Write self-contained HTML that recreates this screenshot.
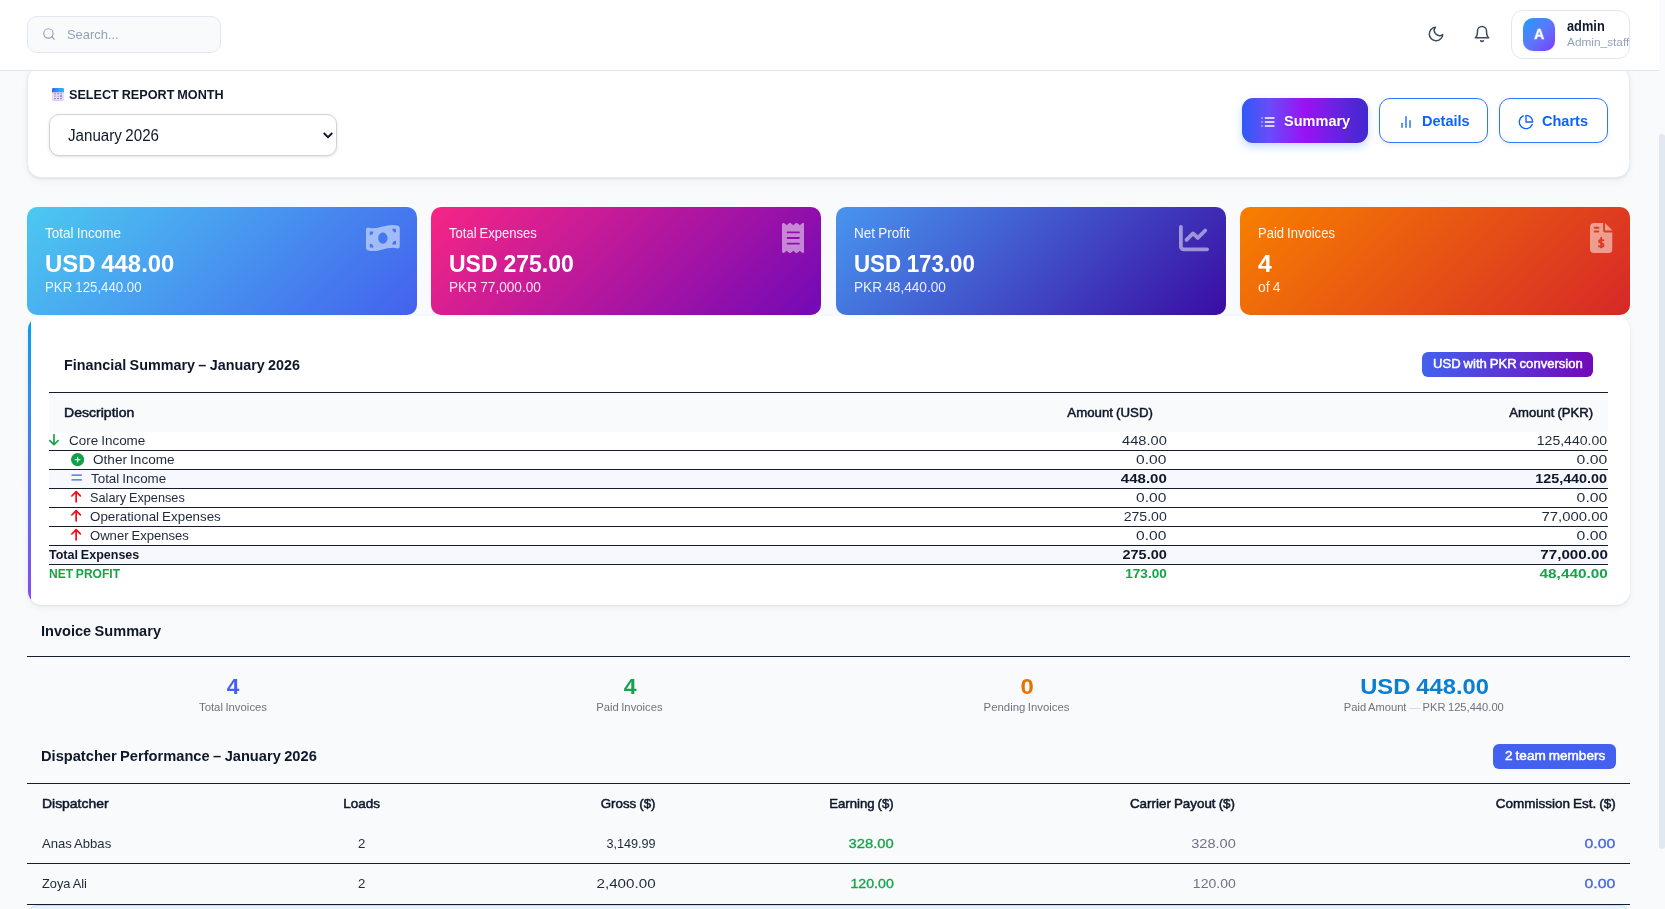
<!DOCTYPE html>
<html lang="en"><head>
<meta charset="utf-8">
<title>Financial Reports</title>
<style>
*{box-sizing:border-box;margin:0;padding:0}
html,body{width:1665px;height:909px;overflow:hidden}
body{position:relative;background:#f8fafc;font-family:"Liberation Sans",sans-serif;color:#1e293b;font-size:13px;word-spacing:-.05em}
svg{display:block}
.t{position:absolute;white-space:nowrap;line-height:1.2}

/* ---------- top bar ---------- */
.topbar{position:absolute;left:0;top:0;width:1659px;height:71px;background:#fff;border-bottom:1px solid #e2e8f0;z-index:5}
.search{position:absolute;left:27px;top:16px;width:194px;height:37px;background:#f8fafc;border:1px solid #e2e8f0;border-radius:10px}
.search svg{position:absolute;left:14px;top:10px}
.search .t{left:39.4px;top:10px;font-size:13.5px;color:#94a3b8}
.ico-moon{position:absolute;left:1427px;top:25px}
.ico-bell{position:absolute;left:1473px;top:25px}
.user{position:absolute;left:1511px;top:10px;width:119px;height:49px;border:1px solid #e2e8f0;border-radius:12px;background:#fff;overflow:hidden}
.avatar{position:absolute;left:11px;top:7px;width:32px;height:32.5px;border-radius:10px;background:linear-gradient(135deg,#1f9dfb 0%,#5a79fa 50%,#7d3bff 100%);box-shadow:0 1px 3px rgba(67,97,238,.10)}
.avatar .t{left:0;width:32px;text-align:center;top:9px;color:#fff;font-weight:700;font-size:14px;-webkit-text-stroke:.3px #fff}
.uname{left:54.5px;top:7px;font-size:14px;font-weight:700;color:#0f172a}
.urole{left:54.5px;top:25px;font-size:11.5px;color:#94a3b8}

/* ---------- scrollbar ---------- */
.sbthumb{position:absolute;left:1659px;top:134px;width:6px;height:715px;background:#e2e8f0;border-radius:3px}

/* ---------- filter card ---------- */
.filter{position:absolute;left:27px;top:66px;width:1603px;height:112px;background:#fff;border:1px solid #e9edf3;border-radius:14px;box-shadow:0 1px 2px rgba(40,70,130,.10),0 3px 9px rgba(15,23,42,.045)}
.flabel{left:41px;top:20px;font-size:13.5px;font-weight:700;color:#0f172a}
.fcal{position:absolute;left:24px;top:21px}
.select{position:absolute;left:21px;top:47px;width:288px;height:42px;border:1px solid #ced4da;border-radius:10px;background:#fff;box-shadow:0 1px 3px rgba(15,23,42,.13)}
.select .t{left:18px;top:12px;font-size:15.6px;color:#0f172a}
.select svg{position:absolute;left:273.4px;top:17.4px}
.btn{position:absolute;top:31px;height:45px;border-radius:11px;font-size:15px;font-weight:700}
.btn svg{position:absolute}
.b1{left:1214px;width:126px;color:#fff;background:linear-gradient(90deg,#2f5af6 0%,#6a4bfa 22%,#9a12f4 50%,#6a22e2 75%,#4128cf 100%);box-shadow:0 4px 9px rgba(59,130,246,.28)}
.b2,.b3{width:109px;color:#0d63fb;background:#fff;border:1px solid #2f7bf7;box-shadow:0 2px 5px rgba(15,23,42,.07)}
.b2{left:1351px}
.b3{left:1471px}

/* ---------- stat cards ---------- */
.stat{position:absolute;top:207px;height:108px;width:390px;border-radius:10px;color:#fff;overflow:hidden}
.s1{left:27px;background:linear-gradient(135deg,#4cc9f0,#4361ee)}
.s2{left:431px;background:linear-gradient(135deg,#f72585,#7209b7)}
.s3{left:836px;background:linear-gradient(135deg,#4895ef,#3a0ca3)}
.s4{left:1240px;background:linear-gradient(135deg,#f77f00,#d62828)}
.stat .l{left:18.2px;top:18px;font-size:14.2px;opacity:.93}
.stat .v{left:18.2px;top:44px;font-size:24px;font-weight:700}
.stat .p{left:18.2px;top:72px;font-size:14.2px;opacity:.88}
.stat svg{position:absolute;opacity:.5}

/* ---------- financial summary ---------- */
.fin{position:absolute;left:27px;top:316px;width:1603px;height:289px}
.fin .bg{position:absolute;left:1px;top:0;right:0;bottom:0;border-radius:14px;background:#fff;overflow:hidden;box-shadow:0 1px 2px rgba(40,70,130,.10),0 3px 9px rgba(15,23,42,.045)}
.fin .bar{position:absolute;left:0;top:0;width:3px;height:100%;background:linear-gradient(180deg,#069fea 0%,#2f8df3 30%,#4f74f3 55%,#6a62f4 78%,#8b47f5 100%)}
.h5{font-size:15px;font-weight:700;color:#0f172a}
.badge{position:absolute;border-radius:6px;color:#fff;font-weight:400;-webkit-text-stroke:.45px currentColor;font-size:12.5px}
.ftable{position:absolute;left:22px;top:76px;width:1559px;height:193px}
.hline{position:absolute;height:1px;background:#151c2e}
.fth{position:absolute;left:0;top:1px;width:100%;height:39px;background:#f8fafc;font-weight:400;-webkit-text-stroke:.5px currentColor;font-size:13px;color:#0f172a}
.fr{position:absolute;left:0;width:100%;height:19px;border-bottom:1px solid #151c2e;font-size:13px;color:#1e293b}
.fr.alt{background:#f6f8fd}
.fr.last{border-bottom:0}
.fr.alt .b{color:#0f172a}
.fr svg{position:absolute}
.fr .t{top:2px}
.fr .t:not(.u):not(.k){margin-left:-.3px}
.u{right:441.5px}
.k{right:0.6px}
.b{font-weight:700}
.sb{font-weight:400;-webkit-text-stroke:.32px currentColor}
.sb6{font-weight:400;-webkit-text-stroke:.5px currentColor}
.green{color:#16a34a}

/* ---------- invoice summary ---------- */
.n{width:300px;text-align:center;font-size:22px;font-weight:700;top:670px}
.lb{width:300px;text-align:center;font-size:11px;color:#6c757d;top:700px}

/* ---------- dispatcher table ---------- */
.dh{font-weight:400;-webkit-text-stroke:.5px currentColor;color:#0f172a}
.blue{color:#4361ee}
.gray{color:#6b7280}
.note{position:absolute;left:27px;top:905px;width:1603px;height:40px;border:1px solid #b3e4fb;border-radius:10px;background:#e8f5fe}
</style>
</head>
<body>

<!-- scrollbar thumb -->
<div class="sbthumb"></div>

<!-- filter card (slides under the top bar) -->
<div class="filter">
  <svg class="fcal" width="12" height="13" viewBox="0 0 12 13"><defs><linearGradient id="calg" x1="0" y1="0" x2="1" y2="0"><stop offset="0" stop-color="#2f6bee"></stop><stop offset=".55" stop-color="#2f9cfb"></stop><stop offset="1" stop-color="#27b4fb"></stop></linearGradient></defs><rect x="0" y="0" width="12" height="13" rx="1.4" fill="#dcbff7"></rect><rect x="0" y="0" width="12" height="12.3" rx="1.4" fill="#e9dcf5"></rect><path d="M0 4.2V1.4A1.4 1.4 0 0 1 1.4 0h9.2A1.4 1.4 0 0 1 12 1.4v2.8z" fill="url(#calg)"></path><g fill="#8c7fab"><rect x="2.1" y="5.3" width="1.8" height="1"></rect><rect x="5.1" y="5.3" width="1.8" height="1"></rect><rect x="8.1" y="5.3" width="1.8" height="1"></rect><rect x="2.1" y="7.7" width="1.8" height="1" opacity=".65"></rect><rect x="5.1" y="7.7" width="1.8" height="1" opacity=".65"></rect><rect x="2.1" y="10.1" width="1.8" height="1"></rect><rect x="5.1" y="10.1" width="1.8" height="1"></rect><rect x="8.1" y="10.1" width="1.8" height="1"></rect></g><rect x="8" y="7" width="2" height="2.2" rx=".5" fill="#5aa9f6"></rect></svg>
  <span class="t flabel" style="top: 20px; transform: scaleX(0.9358); transform-origin: left center;">SELECT REPORT MONTH</span>
  <div class="select"><span class="t" style="top: 12.1px; transform: scaleX(0.9695); transform-origin: left center;">January 2026</span><svg width="10" height="7" viewBox="0 0 10 7" fill="none" stroke="#0f172a" stroke-width="1.9" stroke-linecap="butt" stroke-linejoin="miter"><path d="M.7 1L5 5.1L9.3 1"></path></svg></div>
  <div class="btn b1"><svg style="left:18px;top:16px" width="16" height="16" viewBox="0 0 24 24" fill="none" stroke="#fff" stroke-width="2" stroke-linecap="round" stroke-linejoin="round"><line x1="8" y1="6" x2="21" y2="6"></line><line x1="8" y1="12" x2="21" y2="12"></line><line x1="8" y1="18" x2="21" y2="18"></line><line x1="3" y1="6" x2="3.01" y2="6"></line><line x1="3" y1="12" x2="3.01" y2="12"></line><line x1="3" y1="18" x2="3.01" y2="18"></line></svg><span class="t" style="left: 41.7px; top: 14.2px; text-shadow: rgba(0, 0, 0, 0.15) 0px 1px 2px; transform: scaleX(0.9682); transform-origin: left center;">Summary</span></div>
  <div class="btn b2"><svg style="left:18px;top:15px" width="16" height="16" viewBox="0 0 24 24" fill="none" stroke="currentColor" stroke-width="2" stroke-linecap="round" stroke-linejoin="round"><line x1="18" y1="20" x2="18" y2="10"></line><line x1="12" y1="20" x2="12" y2="4"></line><line x1="6" y1="20" x2="6" y2="14"></line></svg><span class="t" style="left: 41.6px; top: 13.2px; transform: scaleX(0.9695); transform-origin: left center;">Details</span></div>
  <div class="btn b3"><svg style="left:18px;top:15px" width="16" height="16" viewBox="0 0 24 24" fill="none" stroke="currentColor" stroke-width="2" stroke-linecap="round" stroke-linejoin="round"><path d="M21.21 15.89A10 10 0 1 1 8 2.83"></path><path d="M22 12A10 10 0 0 0 12 2v10z"></path></svg><span class="t" style="left: 42.2px; top: 13.2px; transform: scaleX(0.9681); transform-origin: left center;">Charts</span></div>
</div>

<!-- top bar -->
<div class="topbar">
  <div class="search"><svg width="14" height="14" viewBox="0 0 24 24" fill="none" stroke="#94a3b8" stroke-width="2" stroke-linecap="round" stroke-linejoin="round"><circle cx="11" cy="11" r="8"></circle><line x1="21" y1="21" x2="16.65" y2="16.65"></line></svg><span class="t" style="top: 9.7px; transform: scaleX(0.955); transform-origin: left center;">Search...</span></div>
  <svg class="ico-moon" width="18" height="18" viewBox="0 0 24 24" fill="none" stroke="#3b4a62" stroke-width="2" stroke-linecap="round" stroke-linejoin="round"><path d="M21 12.79A9 9 0 1 1 11.21 3 7 7 0 0 0 21 12.79z"></path></svg>
  <svg class="ico-bell" width="18" height="18" viewBox="0 0 24 24" fill="none" stroke="#3b4a62" stroke-width="2" stroke-linecap="round" stroke-linejoin="round"><path d="M18 8A6 6 0 0 0 6 8c0 7-3 9-3 9h18s-3-2-3-9"></path><path d="M13.73 21a2 2 0 0 1-3.46 0"></path></svg>
  <div class="user">
    <div class="avatar"><span class="t" style="top: 7.8px;">A</span></div>
    <span class="t uname" style="top: 7.2px; transform: scaleX(0.9143); transform-origin: left center;">admin</span>
    <span class="t urole" style="top: 24.7px; transform: scaleX(1.0295); transform-origin: left center;">Admin_staff</span>
  </div>
</div>

<!-- stat cards -->
<div class="stat s1"><svg style="left:339px;top:16px" width="33.75" height="30" viewBox="0 0 576 512" fill="#fff"><path d="M0 112.5V422.3c0 18 10.1 35 27 41.3c87 32.5 174 10.3 261-11.9c79.8-20.3 159.6-40.7 239.3-18.9c23 6.3 48.7-9.5 48.7-33.4V89.7c0-18-10.1-35-27-41.3C462 15.9 375 38.1 288 60.3C208.2 80.6 128.4 100.9 48.7 79.1C25.6 72.8 0 88.6 0 112.5zM288 352c-44.2 0-80-43-80-96s35.8-96 80-96s80 43 80 96s-35.8 96-80 96zM64 352c35.3 0 64 28.7 64 64H64V352zm64-208c0 35.3-28.7 64-64 64V144h64zM512 304v64H448c0-35.3 28.7-64 64-64zM448 96h64v64c-35.3 0-64-28.7-64-64z"></path></svg><span class="t l" style="top: 18px; transform: scaleX(0.9524); transform-origin: left center;">Total Income</span><span class="t v" style="top: 43px; transform: scaleX(0.9938); transform-origin: left center;">USD 448.00</span><span class="t p" style="top: 72px; transform: scaleX(0.9335); transform-origin: left center;">PKR 125,440.00</span></div>
<div class="stat s2"><svg style="left:350.5px;top:16px" width="22.5" height="30" viewBox="0 0 384 512" fill="#fff"><path d="M14 2.2C22.5-1.7 32.5-.3 39.6 5.8L80 40.4 120.4 5.8c9-7.7 22.3-7.7 31.2 0L192 40.4 232.4 5.8c9-7.7 22.2-7.7 31.2 0L304 40.4 344.4 5.8c7.1-6.1 17.1-7.5 25.6-3.6s14 12.4 14 21.8V488c0 9.4-5.5 17.9-14 21.8s-18.5 2.5-25.6-3.6L304 471.6l-40.4 34.6c-9 7.7-22.2 7.7-31.2 0L192 471.6l-40.4 34.6c-9 7.7-22.3 7.7-31.2 0L80 471.6 39.6 506.2c-7.1 6.1-17.1 7.5-25.6 3.6S0 497.4 0 488V24C0 14.6 5.5 6.1 14 2.2zM96 144c-8.8 0-16 7.2-16 16s7.2 16 16 16H288c8.8 0 16-7.2 16-16s-7.2-16-16-16H96zM80 352c0 8.8 7.2 16 16 16H288c8.8 0 16-7.2 16-16s-7.2-16-16-16H96c-8.8 0-16 7.2-16 16zM96 240c-8.8 0-16 7.2-16 16s7.2 16 16 16H288c8.8 0 16-7.2 16-16s-7.2-16-16-16H96z"></path></svg><span class="t l" style="top: 18px; transform: scaleX(0.9197); transform-origin: left center;">Total Expenses</span><span class="t v" style="top: 43px; transform: scaleX(0.9592); transform-origin: left center;">USD 275.00</span><span class="t p" style="top: 72px; transform: scaleX(0.9614); transform-origin: left center;">PKR 77,000.00</span></div>
<div class="stat s3"><svg style="left:342.5px;top:16px" width="30" height="30" viewBox="0 0 512 512" fill="#fff"><path d="M64 64c0-17.7-14.3-32-32-32S0 46.3 0 64V400c0 44.2 35.8 80 80 80H480c17.7 0 32-14.3 32-32s-14.3-32-32-32H80c-8.8 0-16-7.2-16-16V64zm406.6 86.6c12.5-12.5 12.5-32.8 0-45.3s-32.8-12.5-45.3 0L320 210.7l-57.4-57.4c-12.5-12.5-32.8-12.5-45.3 0l-112 112c-12.5 12.5-12.5 32.8 0 45.3s32.8 12.5 45.3 0L240 221.3l57.4 57.4c12.5 12.5 32.8 12.5 45.3 0l128-128z"></path></svg><span class="t l" style="top: 18px; transform: scaleX(0.9541); transform-origin: left center;">Net Profit</span><span class="t v" style="top: 43px; transform: scaleX(0.9292); transform-origin: left center;">USD 173.00</span><span class="t p" style="top: 72px; transform: scaleX(0.9614); transform-origin: left center;">PKR 48,440.00</span></div>
<div class="stat s4"><svg style="left:350px;top:16px" width="22.5" height="30" viewBox="0 0 384 512"><defs><mask id="fm"><rect width="384" height="512" fill="#fff"></rect><rect x="64" y="64" width="96" height="32" rx="16" fill="#000"></rect><rect x="64" y="128" width="96" height="32" rx="16" fill="#000"></rect><g fill="none" stroke="#000" stroke-width="31" stroke-linecap="round" stroke-linejoin="round"><path d="M191 250v166"></path><path d="M228 296c-22-10-74-16-76 16c-2 38 82 26 82 68c0 34-50 30-84 16"></path></g></mask></defs><path mask="url(#fm)" fill="#fff" d="M64 0C28.7 0 0 28.7 0 64V448c0 35.3 28.7 64 64 64H320c35.3 0 64-28.7 64-64V160H256c-17.7 0-32-14.3-32-32V0H64zM256 0V128H384L256 0z"></path></svg><span class="t l" style="top: 18px; transform: scaleX(0.9184); transform-origin: left center;">Paid Invoices</span><span class="t v" style="top: 43px; transform: scaleX(1.033); transform-origin: left center;">4</span><span class="t p" style="top: 72px; transform: scaleX(0.9776); transform-origin: left center;">of 4</span></div>

<!-- financial summary -->
<div class="fin">
  <div class="bg"><div class="bar"></div></div>
  <span class="t h5" style="left: 36.6px; top: 39.7px; transform: scaleX(0.9566); transform-origin: left center;">Financial Summary – January 2026</span>
  <div class="badge" style="left:1395px;top:36px;width:171px;height:25px;background:linear-gradient(90deg,#4361ee,#7209b7)"><span class="t" style="left: 10.5px; top: 5.2px; transform: scaleX(1.0457); transform-origin: left center;">USD with PKR conversion</span></div>
  <div class="ftable">
    <div class="hline" style="left:0;top:0;width:100%"></div>
    <div class="fth"><span class="t" style="left: 15.1px; top: 11.9px; transform: scaleX(1.081); transform-origin: left center;">Description</span><span class="t" style="right: 455.4px; top: 11.9px; transform: scaleX(1.0194); transform-origin: right center;">Amount (USD)</span><span class="t" style="right: 15px; top: 11.9px; transform: scaleX(1.0077); transform-origin: right center;">Amount (PKR)</span></div>
    <div class="fr" style="top:40px"><svg style="left:.3px;top:1.4px" width="10.05" height="13.4" viewBox="0 0 384 512" fill="#13a146"><path d="M169.4 470.6c12.5 12.5 32.8 12.5 45.3 0l160-160c12.5-12.5 12.5-32.8 0-45.3s-32.8-12.5-45.3 0L224 370.8V64c0-17.7-14.3-32-32-32s-32 14.3-32 32V370.7L54.6 265.4c-12.5-12.5-32.8-12.5-45.3 0s-12.5 32.8 0 45.3l160 160z"></path></svg><span class="t" style="left: 19.9px; top: 0.75px; transform: scaleX(1.0341); transform-origin: left center;">Core Income</span><span class="t u" style="top: 0.75px; transform: scaleX(1.1241); transform-origin: right center;">448.00</span><span class="t k" style="top: 0.75px; transform: scaleX(1.0802); transform-origin: right center;">125,440.00</span></div>
    <div class="fr" style="top:59px"><svg style="left:22px;top:1.6px" width="13.2" height="13.2" viewBox="0 0 512 512" fill="#13a146"><path d="M256 512A256 256 0 1 0 256 0a256 256 0 1 0 0 512zM232 344V280H168c-13.3 0-24-10.7-24-24s10.7-24 24-24h64V168c0-13.3 10.7-24 24-24s24 10.7 24 24v64h64c13.3 0 24 10.7 24 24s-10.7 24-24 24H280v64c0 13.3-10.7 24-24 24s-24-10.7-24-24z"></path></svg><span class="t" style="left: 44.5px; top: 0.75px; transform: scaleX(1.0447); transform-origin: left center;">Other Income</span><span class="t u" style="top: 0.75px; transform: scaleX(1.197); transform-origin: right center;">0.00</span><span class="t k" style="top: 0.75px; transform: scaleX(1.2128); transform-origin: right center;">0.00</span></div>
    <div class="fr alt" style="top:78px"><svg style="left:22px;top:1.45px" width="11.375" height="13" viewBox="0 0 448 512" fill="#3f5cf0"><rect x="14" y="136" width="420" height="48" rx="24"></rect><rect x="14" y="328" width="420" height="48" rx="24"></rect></svg><span class="t" style="left: 42.7px; top: 0.75px; transform: scaleX(1.0293); transform-origin: left center;">Total Income</span><span class="t u b" style="top: 0.75px; transform: scaleX(1.1543); transform-origin: right center;">448.00</span><span class="t k b" style="top: 0.75px; transform: scaleX(1.1048); transform-origin: right center;">125,440.00</span></div>
    <div class="fr" style="top:97px"><svg style="left:21.7px;top:1.2px" width="10.275" height="13.7" viewBox="0 0 384 512" fill="#f50a1e"><path d="M214.6 41.4c-12.5-12.5-32.8-12.5-45.3 0l-160 160c-12.5 12.5-12.5 32.8 0 45.3s32.8 12.5 45.3 0L160 141.2V448c0 17.7 14.3 32 32 32s32-14.3 32-32V141.2L329.4 246.6c12.5 12.5 32.8 12.5 45.3 0s12.5-32.8 0-45.3l-160-160z"></path></svg><span class="t" style="left: 41.5px; top: 0.75px; transform: scaleX(0.9783); transform-origin: left center;">Salary Expenses</span><span class="t u" style="top: 0.75px; transform: scaleX(1.197); transform-origin: right center;">0.00</span><span class="t k" style="top: 0.75px; transform: scaleX(1.2128); transform-origin: right center;">0.00</span></div>
    <div class="fr" style="top:116px"><svg style="left:21.7px;top:1.2px" width="10.275" height="13.7" viewBox="0 0 384 512" fill="#f50a1e"><path d="M214.6 41.4c-12.5-12.5-32.8-12.5-45.3 0l-160 160c-12.5 12.5-12.5 32.8 0 45.3s32.8 12.5 45.3 0L160 141.2V448c0 17.7 14.3 32 32 32s32-14.3 32-32V141.2L329.4 246.6c12.5 12.5 32.8 12.5 45.3 0s12.5-32.8 0-45.3l-160-160z"></path></svg><span class="t" style="left: 41.5px; top: 0.75px; transform: scaleX(1.0278); transform-origin: left center;">Operational Expenses</span><span class="t u" style="top: 0.75px; transform: scaleX(1.0839); transform-origin: right center;">275.00</span><span class="t k" style="top: 0.75px; transform: scaleX(1.1462); transform-origin: right center;">77,000.00</span></div>
    <div class="fr" style="top:135px"><svg style="left:21.7px;top:1.2px" width="10.275" height="13.7" viewBox="0 0 384 512" fill="#f50a1e"><path d="M214.6 41.4c-12.5-12.5-32.8-12.5-45.3 0l-160 160c-12.5 12.5-12.5 32.8 0 45.3s32.8 12.5 45.3 0L160 141.2V448c0 17.7 14.3 32 32 32s32-14.3 32-32V141.2L329.4 246.6c12.5 12.5 32.8 12.5 45.3 0s12.5-32.8 0-45.3l-160-160z"></path></svg><span class="t" style="left: 41.5px; top: 0.75px; transform: scaleX(1.0057); transform-origin: left center;">Owner Expenses</span><span class="t u" style="top: 0.75px; transform: scaleX(1.197); transform-origin: right center;">0.00</span><span class="t k" style="top: 0.75px; transform: scaleX(1.2128); transform-origin: right center;">0.00</span></div>
    <div class="fr alt" style="top:154px"><span class="t b" style="left: 0.5px; top: 0.75px; transform: scaleX(0.963); transform-origin: left center;">Total Expenses</span><span class="t u b" style="top: 0.75px; transform: scaleX(1.114); transform-origin: right center;">275.00</span><span class="t k b" style="top: 0.75px; transform: scaleX(1.1669); transform-origin: right center;">77,000.00</span></div>
    <div class="fr last green" style="top:173px"><span class="t b" style="left: 0.5px; top: 0.75px; transform: scaleX(0.9277); transform-origin: left center;">NET PROFIT</span><span class="t u b" style="top: 0.75px; transform: scaleX(1.0436); transform-origin: right center;">173.00</span><span class="t k b" style="top: 0.75px; transform: scaleX(1.1808); transform-origin: right center;">48,440.00</span></div>
  </div>
</div>

<!-- invoice summary -->
<span class="t h5" style="left: 41.4px; top: 622px; transform: scaleX(0.971); transform-origin: left center;">Invoice Summary</span>
<div class="hline" style="left:27px;top:656px;width:1603px"></div>
<div class="t n" style="left:82.7px;color:#4361ee"><span style="position: relative; top: 3.8px; display: inline-block; transform: scaleX(1.0286); transform-origin: center center;">4</span></div><div class="t lb" style="left:82.7px"><span style="position: relative; top: 0.9px; display: inline-block; transform: scaleX(1.0318); transform-origin: center center;">Total Invoices</span></div>
<div class="t n" style="left:479.8px;color:#16a34a"><span style="position: relative; top: 3.8px; display: inline-block; transform: scaleX(1.0449); transform-origin: center center;">4</span></div><div class="t lb" style="left:479.8px"><span style="position: relative; top: 0.9px; display: inline-block; transform: scaleX(1.025); transform-origin: center center;">Paid Invoices</span></div>
<div class="t n" style="left:877px;color:#e67300"><span style="position: relative; top: 3.8px; display: inline-block; transform: scaleX(1.0857); transform-origin: center center;">0</span></div><div class="t lb" style="left:877px"><span style="position: relative; top: 0.9px; display: inline-block; transform: scaleX(1.0344); transform-origin: center center;">Pending Invoices</span></div>
<div class="t n" style="left:1274.3px;color:#0b7fd0"><span style="position: relative; top: 3.8px; display: inline-block; transform: scaleX(1.0805); transform-origin: center center;">USD 448.00</span></div><div class="t lb" style="left:1274.3px"><span style="position: relative; top: 0.9px; display: inline-block; transform: scaleX(1.0151); transform-origin: center center;">Paid Amount <span style="color:#cbd5e1">—</span> PKR 125,440.00</span></div>

<!-- dispatcher performance -->
<span class="t h5" style="left: 40.7px; top: 747.3px; transform: scaleX(0.9761); transform-origin: left center;">Dispatcher Performance – January 2026</span>
<div class="badge" style="left:1493px;top:744px;width:123px;height:25px;background:#4361ee"><span class="t" style="left: 11.8px; top: 5.2px; transform: scaleX(1.0834); transform-origin: left center;">2 team members</span></div>
<div class="hline" style="left:27px;top:783px;width:1603px"></div>
<span class="t dh" style="left: 41.6px; top: 796.106px; transform: scaleX(1.0718); transform-origin: left center;">Dispatcher</span>
<div class="t dh" style="left:261.9px;width:200px;text-align:center;top:796.1px"><span style="position: relative; top: 0.006px; display: inline-block; transform: scaleX(1.0389); transform-origin: center center;">Loads</span></div>
<span class="t dh" style="right: 1009.4px; top: 796.106px; transform: scaleX(1.0237); transform-origin: right center;">Gross ($)</span>
<span class="t dh" style="right: 771.5px; top: 796.106px; transform: scaleX(1.0114); transform-origin: right center;">Earning ($)</span>
<span class="t dh" style="right: 429.7px; top: 796.106px; transform: scaleX(1.0302); transform-origin: right center;">Carrier Payout ($)</span>
<span class="t dh" style="right: 49.3px; top: 796.106px; transform: scaleX(1.0369); transform-origin: right center;">Commission Est. ($)</span>
<span class="t " style="left: 41.6px; top: 835.803px; transform: scaleX(1.0065); transform-origin: left center;">Anas Abbas</span>
<div class="t " style="left:261.9px;width:200px;text-align:center;top:835.8px"><span style="position: relative; top: 0.003px; display: inline-block; transform: scaleX(1.0229); transform-origin: center center;">2</span></div>
<span class="t " style="right: 1009.4px; top: 835.803px; transform: scaleX(0.9722); transform-origin: right center;">3,149.99</span>
<span class="t sb green" style="right: 771.5px; top: 835.803px; transform: scaleX(1.1367); transform-origin: right center;">328.00</span>
<span class="t gray" style="right: 429.7px; top: 835.803px; transform: scaleX(1.1191); transform-origin: right center;">328.00</span>
<span class="t sb blue" style="right: 49.3px; top: 835.803px; transform: scaleX(1.2168); transform-origin: right center;">0.00</span>
<div class="hline" style="left:27px;top:863px;width:1603px"></div>
<span class="t " style="left: 41.6px; top: 876.106px; transform: scaleX(0.9848); transform-origin: left center;">Zoya Ali</span>
<div class="t " style="left:261.9px;width:200px;text-align:center;top:876.1px"><span style="position: relative; top: 0.006px; display: inline-block; transform: scaleX(1.0229); transform-origin: center center;">2</span></div>
<span class="t " style="right: 1009.4px; top: 876.106px; transform: scaleX(1.1678); transform-origin: right center;">2,400.00</span>
<span class="t sb green" style="right: 771.5px; top: 876.106px; transform: scaleX(1.0889); transform-origin: right center;">120.00</span>
<span class="t gray" style="right: 429.7px; top: 876.106px; transform: scaleX(1.0788); transform-origin: right center;">120.00</span>
<span class="t sb blue" style="right: 49.3px; top: 876.106px; transform: scaleX(1.2168); transform-origin: right center;">0.00</span>
<div class="hline" style="left:27px;top:904px;width:1603px"></div>

<div class="note"></div>



</body></html>
